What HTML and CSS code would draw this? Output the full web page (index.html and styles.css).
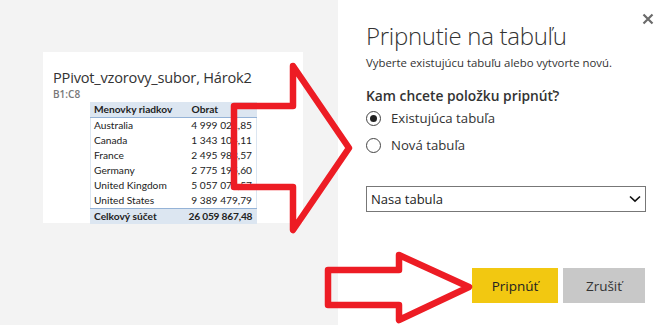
FILE: index.html
```html
<!DOCTYPE html>
<html lang="sk">
<head>
  <meta charset="UTF-8">
  <title>Pripnutie na tabuľu</title>
  <link rel="stylesheet" href="styles.css">
</head>
<body>
  <div class="page">
    <section class="preview">
      <div class="card">
        <h2 class="card-title">PPivot_vzorovy_subor, Hárok2</h2>
        <div class="card-range">B1:C8</div>
        <table class="pivot">
          <colgroup><col class="col-label"><col class="col-value"></colgroup>
          <thead>
            <tr><th>Menovky riadkov</th><th>Obrat</th></tr>
          </thead>
          <tbody>
            <tr><td>Australia</td><td class="num">4 999 021,85</td></tr>
            <tr><td>Canada</td><td class="num">1 343 104,11</td></tr>
            <tr><td>France</td><td class="num">2 495 983,57</td></tr>
            <tr><td>Germany</td><td class="num">2 775 195,60</td></tr>
            <tr><td>United Kingdom</td><td class="num">5 057 074,57</td></tr>
            <tr><td>United States</td><td class="num">9 389 479,79</td></tr>
          </tbody>
          <tfoot>
            <tr><td>Celkový súčet</td><td class="num">26 059 867,48</td></tr>
          </tfoot>
        </table>
      </div>
    </section>

    <section class="dialog">
      <button class="close" aria-label="Zavrieť">
        <svg width="12" height="12" viewBox="0 0 12 12"><path d="M1.5 1.5 L10.5 10.5 M10.5 1.5 L1.5 10.5" stroke="#6b6b6b" stroke-width="2.2" fill="none"/></svg>
      </button>
      <h1 class="dialog-title">Pripnutie na tabuľu</h1>
      <p class="dialog-sub">Vyberte existujúcu tabuľu alebo vytvorte novú.</p>
      <h3 class="dialog-question">Kam chcete položku pripnúť?</h3>
      <div class="options">
        <label class="option"><span class="radio checked"></span>Existujúca tabuľa</label>
        <label class="option"><span class="radio"></span>Nová tabuľa</label>
      </div>
      <div class="select">
        <span>Nasa tabula</span>
        <svg width="12" height="8" viewBox="0 0 12 8"><path d="M1 1.5 L6 6.2 L11 1.5" stroke="#111" stroke-width="1.6" fill="none"/></svg>
      </div>
      <div class="actions">
        <button class="btn btn-primary">Pripnúť</button>
        <button class="btn btn-secondary">Zrušiť</button>
      </div>
    </section>

    <svg class="arrows" width="672" height="325" viewBox="0 0 672 325">
      <path d="M234 106 H293 V66 L349 148 L293 230 V187 H234 Z" />
      <path d="M328 270 H399 V255 L469 287 L399 320 V305 H328 Z" />
    </svg>
  </div>
</body>
</html>
```

FILE: styles.css
```css
* { box-sizing: border-box; }
body {
  margin: 0;
  font-family: "Open Sans", "Noto Sans", sans-serif;
  color: #333;
}
.page {
  position: relative;
  display: flex;
  width: 672px;
  height: 325px;
  overflow: hidden;
}

/* left: tile preview */
.preview {
  width: 338px;
  background: #f3f3f3;
  padding: 52px 0 0 43px;
}
.card {
  width: 260px;
  height: 171px;
  background: #fff;
  padding: 16px 0 0 10px;
}
.card-title {
  margin: 0;
  font-weight: 400;
  font-size: 14.6px;
  line-height: 18px;
  color: #333;
  letter-spacing: -0.2px;
}
.card-range {
  margin-top: 2px;
  font-size: 10px;
  font-weight: 600;
  color: #777;
  line-height: 12px;
}
.pivot {
  margin: 2px 0 0 37px;
  width: 166px;
  table-layout: fixed;
  border-collapse: collapse;
  font-family: Lato, "Open Sans", sans-serif;
  font-size: 10.2px;
  color: #222;
  border-left: 1px solid #dce6f1;
  border-right: 1px solid #dce6f1;
}
.pivot .col-label { width: 98px; }
.pivot .col-value { width: 68px; }
.pivot th, .pivot td {
  height: 15px;
  padding: 0 3px;
  line-height: 15px;
  white-space: nowrap;
}
.pivot th {
  background: #dce6f1;
  font-weight: 700;
  text-align: left;
  border-bottom: 1px solid #95b3d7;
}
.pivot tfoot td {
  background: #dce6f1;
  font-weight: 700;
  border-top: 1px solid #95b3d7;
}
.pivot .num { text-align: right; padding: 0 4px 0 0; }
.pivot tfoot .num { letter-spacing: -0.2px; }

/* right: dialog */
.dialog {
  position: relative;
  flex: 1;
  background: #fff;
  padding: 20px 0 0 28px;
}
.close {
  position: absolute;
  top: 13px;
  right: 18px;
  width: 12px;
  height: 12px;
  border: 0;
  background: none;
  padding: 0;
  line-height: 0;
}
.dialog-title {
  margin: 0;
  font-size: 24px;
  font-weight: 300;
  line-height: 32px;
  color: #333;
  letter-spacing: -0.3px;
}
.dialog-sub {
  margin: 3px 0 0;
  font-size: 11.4px;
  line-height: 16px;
  color: #333;
}
.dialog-question {
  margin: 16px 0 0;
  font-size: 13.8px;
  font-weight: 600;
  line-height: 18px;
  color: #333;
}
.options {
  display: flex;
  flex-direction: column;
  gap: 7px;
  margin-top: 3px;
}
.option {
  display: flex;
  align-items: center;
  gap: 10px;
  font-size: 13.2px;
  line-height: 20px;
  color: #333;
}
.radio {
  width: 15px;
  height: 15px;
  border: 1px solid #444;
  border-radius: 50%;
  display: flex;
  align-items: center;
  justify-content: center;
}
.radio.checked::after {
  content: "";
  width: 7px;
  height: 7px;
  border-radius: 50%;
  background: #222;
}
.select {
  margin-top: 31px;
  width: 280px;
  height: 26px;
  border: 1px solid #777;
  display: flex;
  align-items: center;
  justify-content: space-between;
  padding: 0 4px 0 4px;
  font-size: 13px;
  color: #222;
}
.actions {
  display: flex;
  justify-content: flex-end;
  gap: 5px;
  margin: 56px 27px 0 0;
}
.btn {
  height: 35px;
  border: 0;
  font-family: inherit;
  font-size: 13.5px;
  color: #222;
}
.btn-primary { width: 86px; background: #f2c811; }
.btn-secondary { width: 82px; background: #c8c8c8; color: #333; }

/* red annotation arrows over the screenshot */
.arrows {
  position: absolute;
  top: 0;
  left: 0;
  pointer-events: none;
}
.arrows path {
  fill: none;
  stroke: #ed1c24;
  stroke-width: 6.5;
  stroke-linejoin: round;
}
```
